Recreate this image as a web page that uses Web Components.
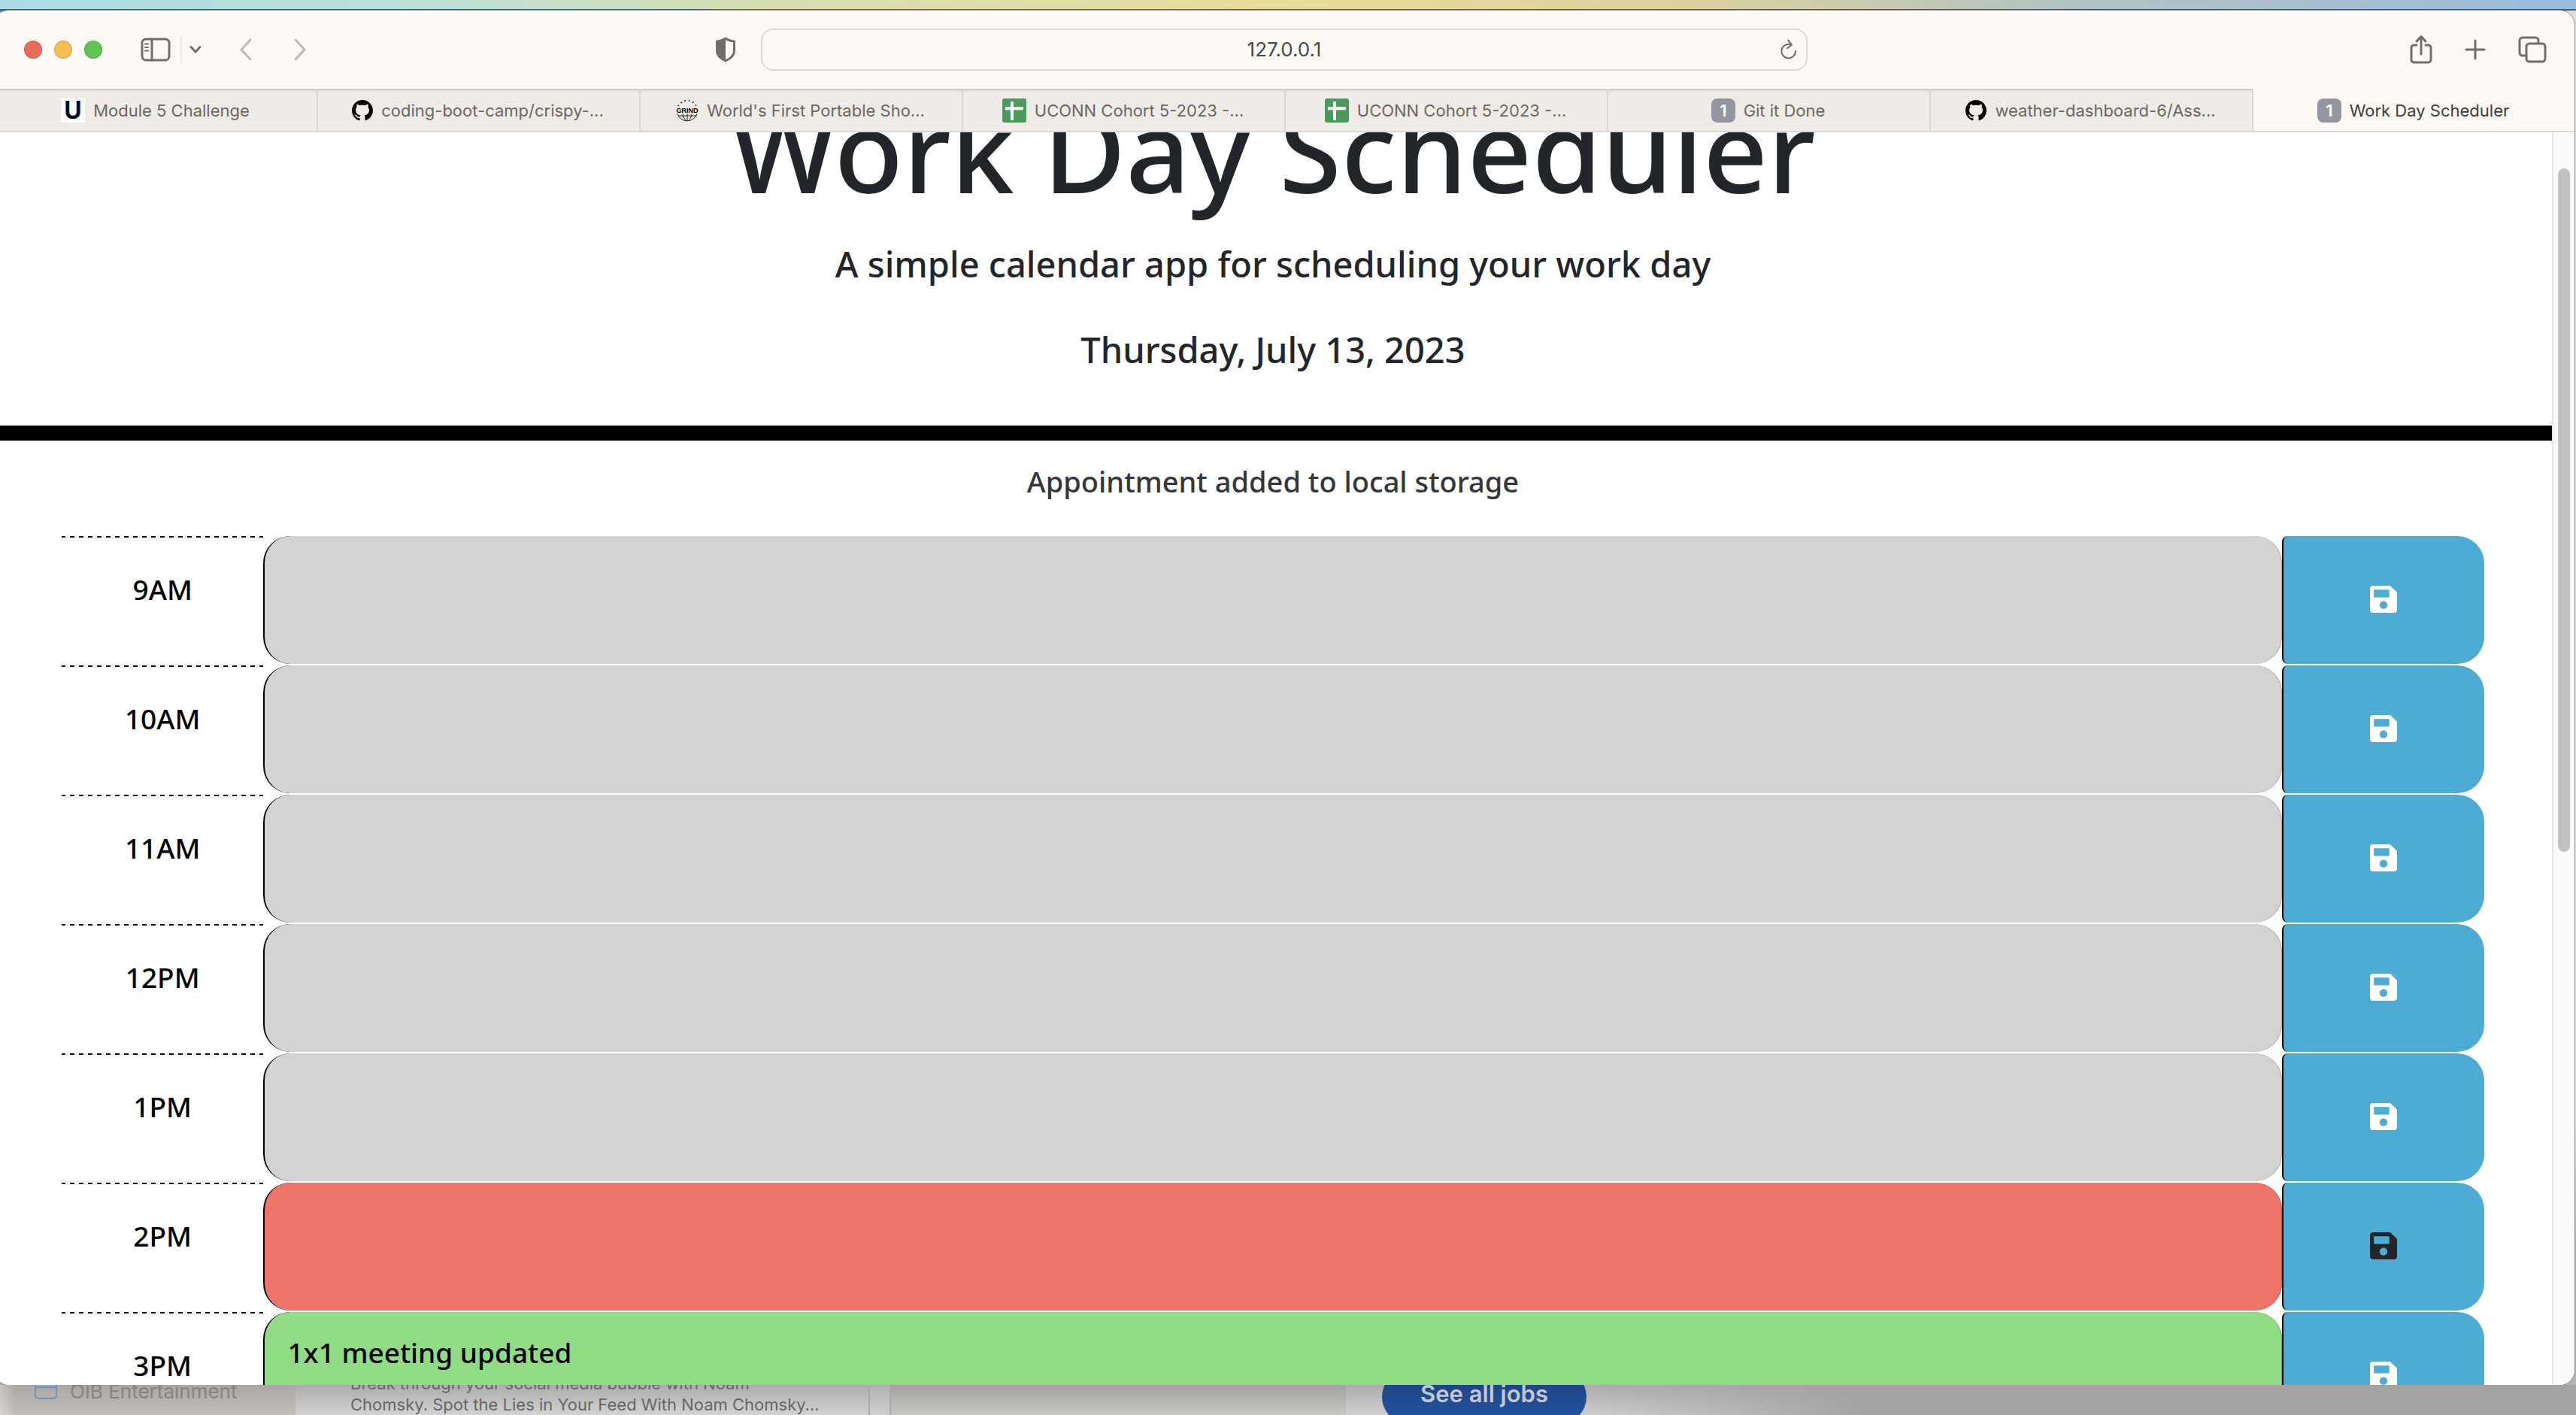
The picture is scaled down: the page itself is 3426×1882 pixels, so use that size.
<!DOCTYPE html>
<html lang="en">
<head>
<meta charset="utf-8">
<title>Work Day Scheduler</title>
<style>
  html, body { margin: 0; height: 100%; overflow: hidden; }
  body { font-family: Inter, "Liberation Sans", sans-serif; }
</style>
</head>
<body>
<desktop-shell>
  <browser-window slot="window">
    <browser-toolbar slot="toolbar"></browser-toolbar>
    <browser-tab slot="tab" icon="u">Module 5 Challenge</browser-tab>
    <browser-tab slot="tab" icon="github">coding-boot-camp/crispy-...</browser-tab>
    <browser-tab slot="tab" icon="grind">World's First Portable Sho...</browser-tab>
    <browser-tab slot="tab" icon="sheets">UCONN Cohort 5-2023 -...</browser-tab>
    <browser-tab slot="tab" icon="sheets">UCONN Cohort 5-2023 -...</browser-tab>
    <browser-tab slot="tab" icon="one">Git it Done</browser-tab>
    <browser-tab slot="tab" icon="github">weather-dashboard-6/Ass...</browser-tab>
    <browser-tab slot="tab" icon="one" active>Work Day Scheduler</browser-tab>
    <work-day-scheduler>
      <page-header>
        <span slot="title">Work Day Scheduler</span>
        <span slot="lead">A simple calendar app for scheduling your work day</span>
        <span slot="date">Thursday, July 13, 2023</span>
      </page-header>
      <status-message>Appointment added to local storage</status-message>
      <time-block hour="9AM" state="past"></time-block>
      <time-block hour="10AM" state="past"></time-block>
      <time-block hour="11AM" state="past"></time-block>
      <time-block hour="12PM" state="past"></time-block>
      <time-block hour="1PM" state="past"></time-block>
      <time-block hour="2PM" state="present" pressed></time-block>
      <time-block hour="3PM" state="future" entry="1x1 meeting updated"></time-block>
    </work-day-scheduler>
  </browser-window>
  <background-apps slot="behind"></background-apps>
</desktop-shell>

<script>
const define = (name, html, setup) => {
  const template = document.createElement('template');
  template.innerHTML = html;
  customElements.define(name, class extends HTMLElement {
    connectedCallback() {
      if (this.shadowRoot) return;
      const root = this.attachShadow({ mode: 'open' });
      root.append(template.content.cloneNode(true));
      if (setup) setup(this, root);
    }
  });
};

define('desktop-shell', `
<style>
  :host { display: flex; flex-direction: column; height: 100vh; overflow: hidden;
    background: linear-gradient(90deg, #5f9fc4, #d4d4d2 4%, #dededc); }
  .wallpaper { flex: none; height: 12px; border-bottom: 2px solid;
    border-image: linear-gradient(90deg, #2c5f80 27%, #76683a 28%, #7a5a2c 60%, #5c4c48 76%, #2c4f7c 82%, #31598c) 1;
    background: linear-gradient(90deg, #abdce6, #bfe0d2 18%, #d3dfb6 27%, #e8dc9a 50%, #ddd29c 65%, #b3c4c2 80%, #9bbcdc); }
  .stage { flex: 1; min-height: 0; display: flex; background: linear-gradient(#0000 80%, #b4b3b2 90%); }
</style>
<div class="wallpaper"></div>
<div class="stage"><slot name="window"></slot></div>
<slot name="behind"></slot>`);

define('browser-window', `
<style>
  :host { display: flex; flex-direction: column; flex: 1; min-width: 0; margin: 0 2px 0 -8px;
    border-radius: 20px; overflow: hidden; background: #fff; box-shadow: 0 0 0 1px #8d8c8b; }
  .tabs { flex: none; display: grid; grid-auto-flow: column; grid-auto-columns: minmax(0, 1fr);
    height: 56px; border-bottom: 2px solid #d9d8d5; }
  .view { flex: 1; min-height: 0; display: flex; }
  .page { flex: 1; min-width: 0; overflow: hidden; }
  .track { flex: none; width: 28px; border-left: 2px solid #e6e6e6; background: #fafafa; display: flex; justify-content: center; }
  .thumb { width: 16px; height: 909px; margin-top: 48px; border-radius: 8px; background: #c1c1c1; }
</style>
<slot name="toolbar"></slot>
<nav class="tabs"><slot name="tab"></slot></nav>
<div class="view">
  <main class="page"><slot></slot></main>
  <div class="track"><div class="thumb"></div></div>
</div>`);

define('browser-toolbar', `
<style>
  :host { flex: none; display: grid; grid-template-columns: minmax(0, 1fr) 1392px minmax(0, 1fr);
    align-items: center; height: 104px; background: #fdfaf5; }
  .group { display: flex; align-items: center; }
  .lights { display: flex; gap: 16px; margin: 0 51px 0 40px; }
  .lights button { width: 24px; height: 24px; border-radius: 50%; box-shadow: inset 0 0 0 1px #0002; }
  .close { background: #ec6a5e; } .min { background: #f5bf4f; } .max { background: #61c554; }
  button { display: flex; align-items: center; justify-content: center; padding: 0; border: 0; background: none; }
  svg { display: block; fill: none; stroke: #716e6a; stroke-width: 3; stroke-linecap: round; stroke-linejoin: round; }
  .faint svg { stroke: #bdbab5; }
  .rule { width: 2px; height: 36px; margin: 0 10px 0 13px; background: #eceae5; }
  .back { margin-left: 51px; } .forward { margin-left: 56px; }
  .shield { margin: 0 33px 0 auto; }
  .address { box-sizing: border-box; display: flex; align-items: center; height: 56px;
    padding: 0 12px; border: 2px solid #dddad6; border-radius: 16px; }
  input { flex: 1; min-width: 0; padding: 0 0 0 22px; border: 0; outline: 0; background: none; text-align: center;
    font: 400 26px/32px Inter, sans-serif; color: #4a4846; }
  .end { justify-content: flex-end; gap: 43px; padding-right: 37px; }
</style>
<div class="group">
  <div class="lights">
    <button class="close" aria-label="Close"></button>
    <button class="min" aria-label="Minimize"></button>
    <button class="max" aria-label="Zoom"></button>
  </div>
  <button aria-label="Sidebar"><svg width="40" height="32" viewBox="0 0 40 32"><rect x="2" y="2" width="36" height="28" rx="5"/><path d="M15 2v28"/><path d="M6 8.500h4M6 13h4M6 17.500h4" stroke-width="2"/></svg></button>
  <span class="rule"></span>
  <button aria-label="Sidebar options"><svg width="16" height="12" viewBox="0 0 16 12"><path d="M2 2.500l6 6.500 6-6.500"/></svg></button>
  <button class="faint back" aria-label="Back"><svg width="16" height="32" viewBox="0 0 16 32"><path d="M14 3L2 16l12 13"/></svg></button>
  <button class="faint forward" aria-label="Forward"><svg width="16" height="32" viewBox="0 0 16 32"><path d="M2 3l12 13L2 29"/></svg></button>
  <button class="shield" aria-label="Privacy report"><svg width="28" height="34" viewBox="0 0 28 34"><path d="M14 2c3 2.500 7 3.500 11.500 4v13c0 6-5 10-11.500 13C7.500 29 2.500 25 2.500 19V6C7 5.500 11 4.500 14 2z"/><path d="M14 2v30C7.500 29 2.500 25 2.500 19V6C7 5.500 11 4.500 14 2z" fill="#716e6a" stroke="none"/></svg></button>
</div>
<div class="address">
  <input type="text" value="127.0.0.1" aria-label="Address">
  <button aria-label="Reload"><svg width="22" height="28" viewBox="0 0 22 28" style="stroke-width:2"><path d="M20 16a9.300 9.300 0 1 1-6-8.600"/><path d="M10 1.500l5 6-6 4.800"/></svg></button>
</div>
<div class="group end">
  <button aria-label="Share"><svg width="30" height="40" viewBox="0 0 30 40"><path d="M9 14H5.500A3.500 3.500 0 0 0 2 17.500v16A3.500 3.500 0 0 0 5.500 37h19a3.500 3.500 0 0 0 3.500-3.500v-16a3.500 3.500 0 0 0-3.500-3.500H21M15 26V3M9 9l6-6.500L21 9"/></svg></button>
  <button aria-label="New tab"><svg width="28" height="28" viewBox="0 0 28 28"><path d="M14 2v24M2 14h24"/></svg></button>
  <button aria-label="Tab overview"><svg width="38" height="36" viewBox="0 0 38 36"><rect x="11" y="10" width="25" height="24" rx="4"/><path d="M10 26H6a4 4 0 0 1-4-4V6a4 4 0 0 1 4-4h17a4 4 0 0 1 4 4v3"/></svg></button>
</div>`);

const favicons = {
  u: `<svg width="32" height="32" viewBox="0 0 32 32"><rect width="32" height="32" fill="#fff"/><text x="16" y="27" text-anchor="middle" font-family="Inter" font-weight="700" font-size="32" fill="#060d2e">U</text></svg>`,
  github: `<svg width="28" height="28" viewBox="0 0 16 16"><path d="M8 0C3.58 0 0 3.58 0 8c0 3.540 2.290 6.530 5.470 7.590.4.070.55-.17.55-.38 0-.19-.01-.82-.01-1.490-2.010.37-2.530-.49-2.690-.94-.09-.23-.48-.94-.82-1.130-.28-.15-.68-.52-.01-.53.63-.01 1.080.58 1.230.82.72 1.210 1.870.87 2.330.66.07-.52.28-.87.51-1.070-1.780-.2-3.640-.89-3.640-3.950 0-.87.31-1.590.82-2.150-.08-.2-.36-1.020.08-2.120 0 0 .67-.21 2.200.82.64-.18 1.320-.27 2-.27.68 0 1.360.09 2 .27 1.530-1.040 2.200-.82 2.200-.82.44 1.100.16 1.920.08 2.120.51.56.82 1.270.82 2.150 0 3.070-1.870 3.750-3.650 3.950.29.25.54.73.54 1.480 0 1.070-.01 1.930-.01 2.200 0 .21.15.46.55.38A8.012 8.012 0 0 0 16 8c0-4.420-3.580-8-8-8z"/></svg>`,
  grind: `<svg width="30" height="30" viewBox="0 0 30 30" fill="none" stroke="#222"><path d="M3 9A13.500 13.500 0 0 1 27 9" stroke-width="2" stroke-dasharray="1.500 4"/><path d="M2 19a13.500 13.500 0 0 0 26 0M15 19v10M9 19c0 4 2 7 4 9M21 19c0 4-2 7-4 9M3 22h24" stroke-width="1"/><text x="15" y="18" text-anchor="middle" font-family="Liberation Sans" font-weight="700" font-size="9" fill="#000" stroke="none">GRIND</text></svg>`,
  sheets: `<svg width="32" height="32" viewBox="0 0 32 32"><rect width="32" height="32" rx="3" fill="#4a9a5f"/><path d="M13 4v25M4 13.200h24" stroke="#fff" stroke-width="4"/></svg>`,
  one: `<svg width="32" height="32" viewBox="0 0 32 32"><rect width="32" height="32" rx="8" fill="#9595a2"/><text x="16" y="24" text-anchor="middle" font-family="Inter" font-weight="600" font-size="22" fill="#fff">1</text></svg>`
};

define('browser-tab', `
<style>
  :host { display: flex; min-width: 0; background: #efece7; border-left: 2px solid #dad8d4; box-shadow: inset 0 2px 0 #cfccc7, inset 0 6px 4px -3px #0001; }
  :host([active]) { background: #fdfaf5; box-shadow: none; }
  button { flex: 1; min-width: 0; display: flex; align-items: center; justify-content: center; gap: 11px;
    padding: 2px 2px 0 0; border: 0; background: none; font: 400 22px/28px Inter, sans-serif; color: #6b6864; white-space: nowrap; }
  :host([active]) button { color: #3f3c39; }
  svg { display: block; }
</style>
<button><span class="icon"></span><slot></slot></button>`, (el, root) => {
  root.querySelector('.icon').innerHTML = favicons[el.getAttribute('icon')];
});

define('work-day-scheduler', `
<style>
  :host { display: flex; flex-direction: column; color: #22262a;
    font-family: "Noto Sans", "Open Sans", sans-serif; font-weight: 500; }
  .planner { display: flex; flex-direction: column; }
</style>
<div class="planner"><slot></slot></div>`);

define('page-header', `
<style>
  :host { display: block; margin-top: -62px; padding-bottom: 65px; border-bottom: 20px solid #000; text-align: center; }
  h1 { margin: 0 0 31px; font-size: 150px; line-height: 170px; font-weight: 500; white-space: nowrap; }
  p { margin: 0; font-size: 47px; line-height: 72px; }
  p + p { margin-top: 42px; }
</style>
<h1><slot name="title"></slot></h1>
<p><slot name="lead"></slot></p>
<p><slot name="date"></slot></p>`);

define('status-message', `
<style>
  :host { display: block; padding: 24px 0 43px; text-align: center; font-size: 38px; line-height: 60px; color: #33373a; }
</style>
<slot></slot>`);

define('time-block', `
<style>
  :host { display: grid; grid-template-columns: 8.33% 1fr 8.34%; height: 170px; margin: 0 90px 2px; }
  :host([state=past]) { --fill: #d3d3d3; --edge: #aaa; }
  :host([state=present]) { --fill: #ee7369; --edge: #b8584f; }
  :host([state=future]) { --fill: #90dc84; --edge: #6ea865; }
  label { padding-top: 41px; text-align: center; font-size: 37px; line-height: 60px; color: #000;
    background: repeating-linear-gradient(90deg, #000 0 5px, #0000 5px 11px, #000 11px 12px) 0 0 / 100% 2px no-repeat; }
  textarea { box-sizing: border-box; width: 100%; height: 170px; margin: 0; padding: 24px 30px; resize: none; outline: 0;
    border: 0 solid #000; border-left-width: 2px; border-radius: 36px; background: var(--fill);
    box-shadow: inset -1px 0 0 var(--edge);
    font: inherit; font-size: 37px; line-height: 60px; color: #000; overflow: hidden; }
  button { display: flex; align-items: center; justify-content: center; padding: 0 2px 2px 0;
    border: 0 solid #000; border-left-width: 2px; border-radius: 8px 36px 36px 8px; background: #4eabd3; color: #fff; }
  :host([pressed]) button { color: #22262a; }
  svg { display: block; fill: currentColor; }
</style>
<label for="entry"></label>
<textarea id="entry"></textarea>
<button aria-label="save"><svg width="36" height="36" viewBox="0 32 448 448"><path d="M433.941 129.941l-83.882-83.882A48 48 0 0 0 316.118 32H48C21.490 32 0 53.490 0 80v352c0 26.510 21.490 48 48 48h352c26.510 0 48-21.490 48-48V163.882a48 48 0 0 0-14.059-33.941zM224 416c-35.346 0-64-28.654-64-64 0-35.346 28.654-64 64-64s64 28.654 64 64c0 35.346-28.654 64-64 64zm96-304.520V212c0 6.627-5.373 12-12 12H76c-6.627 0-12-5.373-12-12V108c0-6.627 5.373-12 12-12h228.520c3.183 0 6.235 1.264 8.485 3.515l3.480 3.480A11.996 11.996 0 0 1 320 111.480z"/></svg></button>`, (el, root) => {
  root.querySelector('label').textContent = el.getAttribute('hour');
  root.querySelector('textarea').value = el.getAttribute('entry') || '';
});

define('background-apps', `
<style>
  :host { flex: none; display: grid; grid-template-columns: 393px 762px 30px 605px 1fr; height: 40px; overflow: hidden;
    align-items: stretch; }
  .pane { min-width: 0; display: flex; align-items: flex-end; overflow: hidden; white-space: nowrap; }
  .folders { gap: 16px; padding-left: 46px; background: linear-gradient(90deg, #fff5, #fff0 20px), linear-gradient(#aaa6a3, #c2beba); font-size: 26px; line-height: 32px; color: #878380; }
  .folders span { padding-bottom: 15px; }
  .folders svg { flex: none; margin-bottom: 20px; }
  .note { padding-left: 73px; background: linear-gradient(#acacac, #d2d2d2); font-size: 22px; line-height: 28px; color: #676767; }
  .note p { margin: 0; }
  .gutter { border: solid #a9a9ab; border-width: 0 2px; background: linear-gradient(#b0b0b0, #d0d0d0); }
  .desk { background: linear-gradient(#a4a2a0, #c8c6c3); }
  .jobs { background: linear-gradient(90deg, #0000 300px, #a5a3a1 700px), linear-gradient(#abacad, #d0d0d0); }
  .jobs a { box-sizing: border-box; width: 272px; height: 72px; margin: 0 0 -12px 48px; border-radius: 36px; text-align: center; text-decoration: none;
    background: linear-gradient(#1d3f7e, #2455a3); font-size: 31px; line-height: 64px; font-weight: 600; color: #c3c8d0; }
</style>
<div class="pane folders"><svg width="31" height="24" viewBox="0 0 31 24" fill="none" stroke="#6f93bf" stroke-width="2"><rect x="1" y="-8" width="28" height="30" rx="4"/><path d="M1 7h28"/></svg><span>OIB Entertainment</span></div>
<div class="pane note"><p>Break through your social media bubble with Noam<br>Chomsky. Spot the Lies in Your Feed With Noam Chomsky...</p></div>
<div class="pane gutter"></div>
<div class="pane desk"></div>
<div class="pane jobs"><a href="#jobs">See all jobs</a></div>`);
</script>
</body>
</html>
